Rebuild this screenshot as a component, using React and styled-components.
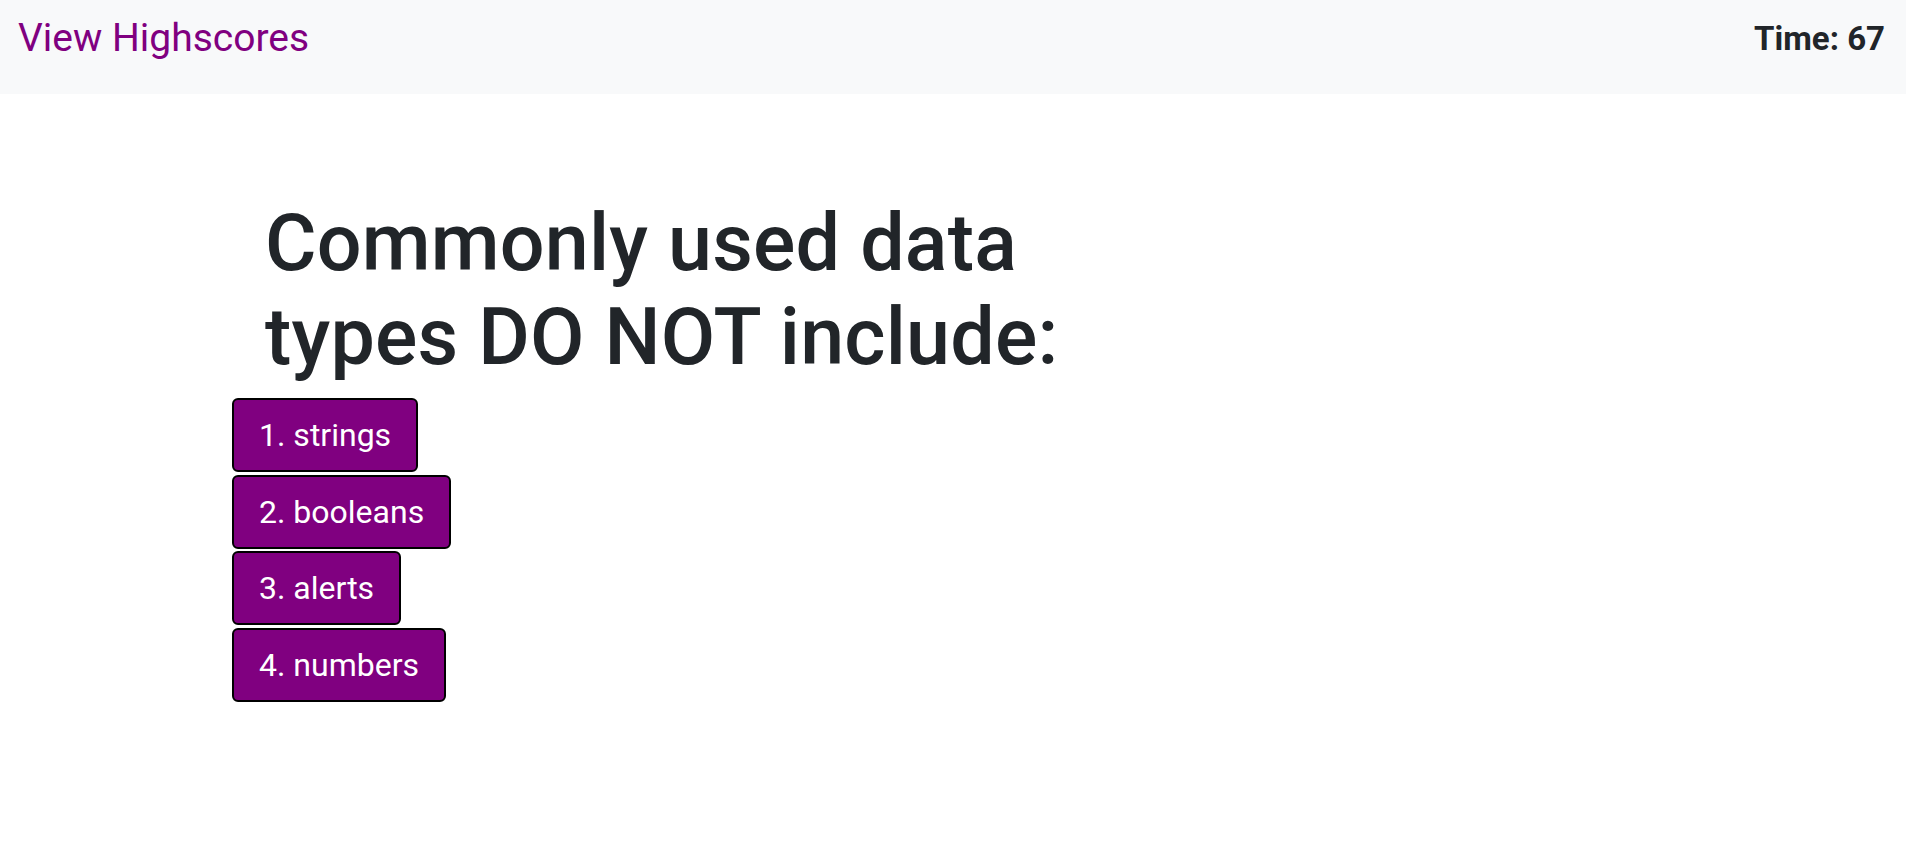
import styled, { createGlobalStyle } from 'styled-components'

const GlobalStyle = createGlobalStyle`
  html, body {
    margin: 0;
    padding: 0;
    background: #fff;
    font-family: Roboto, "Liberation Sans", Arial, sans-serif;
    color: #212529;
  }
`

const answers = ['1. strings', '2. booleans', '3. alerts', '4. numbers']

function App() {
  return (
    <>
      <GlobalStyle />
      <NavBar>
        <HighscoreLink href='#'>View Highscores</HighscoreLink>
        <Timer>Time: 67</Timer>
      </NavBar>
      <Quiz>
        <Question>Commonly used data types DO NOT include:</Question>
        <Choices>
          {answers.map((a) => (
            <Choice key={a}>{a}</Choice>
          ))}
        </Choices>
      </Quiz>
    </>
  )
}

export default App

const NavBar = styled.nav`
  display: flex;
  justify-content: space-between;
  align-items: flex-start;
  height: 94px;
  box-sizing: border-box;
  padding: 9px 21px 0 18px;
  background-color: #f8f9fa;
`

const HighscoreLink = styled.a`
  font-size: 39px;
  line-height: 58px;
  color: #800080;
  text-decoration: none;
`

const Timer = styled.div`
  margin-top: 6px;
  font-size: 33px;
  line-height: 48px;
  font-weight: bold;
  color: #212529;
`

const Quiz = styled.main`
  padding: 102px 0 0 232px;
`

const Question = styled.h1`
  width: 880px;
  margin: 0 0 14px 33px;
  font-size: 79px;
  line-height: 94px;
  font-weight: 500;
  letter-spacing: 0.2px;
  color: #212529;
`

const Choices = styled.div`
  display: flex;
  flex-direction: column;
  align-items: flex-start;
  gap: 2.5px;
`

const Choice = styled.button`
  height: 74px;
  padding: 0 25px;
  border: 2px solid #000;
  border-radius: 6px;
  background-color: #800080;
  color: #fff;
  font-family: Roboto, "Liberation Sans", Arial, sans-serif;
  font-size: 32px;
  cursor: pointer;
`
